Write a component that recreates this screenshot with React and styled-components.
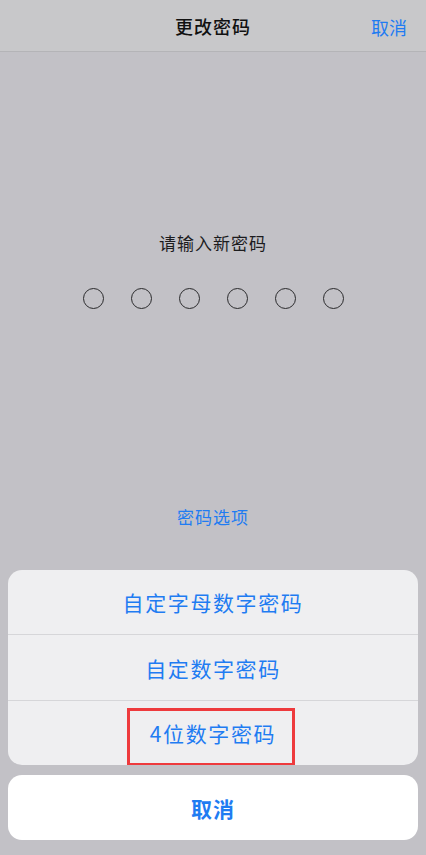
import styled, { createGlobalStyle } from "styled-components";

const BLUE = "#1f7cf2";

const GlobalStyle = createGlobalStyle`
  body {
    margin: 0;
    font-family: "Noto Sans CJK SC", "Noto Sans", sans-serif;
    background: #c2c1c6;
  }
`;

// PAGE LAYOUT
const Page = styled.div`
  width: 426px;
  height: 855px;
  display: flex;
  flex-direction: column;
  background: #c2c1c6;
  overflow: hidden;
`;

const Header = styled.div`
  height: 51px;
  border-bottom: 1px solid #b4b4b7;
  background: #c8c8ca;
  position: relative;
  display: flex;
  align-items: center;
  justify-content: center;
`;

const Title = styled.div`
  font-size: 18px;
  font-weight: 500;
  letter-spacing: 1px;
  color: #111;
`;

const HeaderAction = styled.div`
  position: absolute;
  right: 19px;
  top: 14px;
  font-size: 18px;
  color: ${BLUE};
`;

const Prompt = styled.div`
  margin-top: 179px;
  text-align: center;
  font-size: 17px;
  line-height: 24px;
  letter-spacing: 1px;
  color: #1c1c1e;
`;

const Dots = styled.div`
  margin-top: 33px;
  display: flex;
  justify-content: center;
  gap: 27px;
`;

const Dot = styled.div`
  width: 19px;
  height: 19px;
  border-radius: 50%;
  border: 1.5px solid #2a2a2c;
`;

const OptionsLink = styled.div`
  margin-top: 196px;
  text-align: center;
  font-size: 17px;
  line-height: 24px;
  letter-spacing: 1px;
  color: ${BLUE};
`;

// ACTION SHEET
const Sheet = styled.div`
  margin: 41px 8px 0;
  background: #efeff1;
  border-radius: 14px;
  overflow: hidden;
`;

const Row = styled.div`
  position: relative;
  height: ${({ h }) => h || 65}px;
  display: flex;
  align-items: center;
  justify-content: center;
  font-size: 21px;
  letter-spacing: 1.6px;
  color: ${BLUE};
  border-top: ${({ first }) => (first ? "none" : "1px solid #d6d6d9")};
`;

const Highlight = styled.div`
  position: absolute;
  left: 119px;
  top: 7px;
  width: 162px;
  height: 52px;
  border: 3px solid #ee3a3d;
`;

const CancelCard = styled.div`
  margin: 10px 8px 0;
  height: 65px;
  background: #fff;
  border-radius: 14px;
  display: flex;
  align-items: center;
  justify-content: center;
  font-size: 21px;
  font-weight: 700;
  letter-spacing: 1px;
  color: ${BLUE};
`;

const App = () => {
  return (
    <Page>
      <GlobalStyle />
      <Header>
        <Title>更改密码</Title>
        <HeaderAction>取消</HeaderAction>
      </Header>
      <Prompt>请输入新密码</Prompt>
      <Dots>
        {[0, 1, 2, 3, 4, 5].map((i) => (
          <Dot key={i} />
        ))}
      </Dots>
      <OptionsLink>密码选项</OptionsLink>
      <Sheet>
        <Row first h={64}>自定字母数字密码</Row>
        <Row>自定数字密码</Row>
        <Row h={64}>
          4位数字密码
          <Highlight />
        </Row>
      </Sheet>
      <CancelCard>取消</CancelCard>
    </Page>
  );
};

export default App;
